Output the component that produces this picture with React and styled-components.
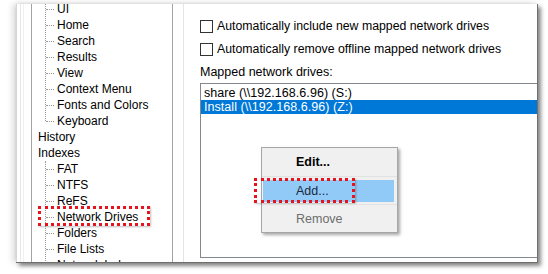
import styled, { createGlobalStyle } from 'styled-components';

const Global = createGlobalStyle`
html, body {
  margin: 0;
  padding: 0;
  background: #fff;
}
body {
  font-family: "Liberation Sans", Arial, sans-serif;
  font-size: 12px;
  color: #000;
}
`;

const Stage = styled.div`
width: 548px;
height: 274px;
padding: 4px 0 0 16px;
box-sizing: border-box;
overflow: hidden;
`;

const Window = styled.div`
display: flex;
width: 522px;
height: 259px;
box-sizing: border-box;
background: #fff;
border-right: 1px solid #6f6f6f;
border-bottom: 1px solid #6f6f6f;
box-shadow: 3px 3px 4px rgba(0, 0, 0, 0.45), -4px 0 6px rgba(0, 0, 0, 0.12), 0 -2px 4px rgba(0, 0, 0, 0.06);
overflow: hidden;
`;

const FrameEdge = styled.div`
width: 15px;
flex: none;
box-sizing: border-box;
border-left: 1px solid #d6d6d6;
background: linear-gradient(to right, #fff 0 3px, #e8e8e8 3px 4px, #fff 4px 6px, #efefef 6px 7px, #fff 7px);
`;

const TreePane = styled.div`
width: 142px;
flex: none;
box-sizing: border-box;
border-left: 1px solid #a3a3a3;
border-right: 1px solid #a3a3a3;
overflow: hidden;
`;

const TreeList = styled.div`
margin-top: -3px;
`;

const Group = styled.div`
position: relative;

&::before {
  content: "";
  position: absolute;
  left: 13px;
  top: 0;
  bottom: ${p => p.$open ? '-100px' : '8px'};
  border-left: 1px dotted #9a9a9a;
}
`;

const Node = styled.div`
position: relative;
height: 16px;
line-height: 16px;
padding-left: ${p => p.$child ? '25px' : '6px'};
white-space: nowrap;

${p => p.$child && `
&::before {
  content: "";
  position: absolute;
  left: 14px;
  top: 8px;
  width: 8px;
  border-top: 1px dotted #9a9a9a;
}
`}
`;

const Marker = styled.span`
position: absolute;
left: ${p => p.$left}px;
top: ${p => p.$top}px;
width: ${p => p.$w}px;
height: ${p => p.$h}px;
box-sizing: border-box;
border: 3px dotted #e8121c;
box-shadow: 1px 1px 2px rgba(0, 0, 0, 0.25);
pointer-events: none;
`;

const Splitter = styled.div`
width: 10px;
flex: none;
border-right: 1px solid #e4e4e4;
`;

const RightPane = styled.div`
flex: 1;
padding: 14px 0 0 16px;
display: flex;
flex-direction: column;
font-size: 12.3px;
`;

const CheckRow = styled.label`
display: flex;
align-items: center;
gap: 4px;
height: 16px;
margin-bottom: 7px;
white-space: nowrap;
`;

const Box = styled.span`
width: 13px;
height: 13px;
box-sizing: border-box;
border: 1px solid #333;
background: #fff;
flex: none;
`;

const Caption = styled.div`
height: 16px;
line-height: 16px;
margin-bottom: 3px;
font-size: 12.5px;
`;

const ListBox = styled.div`
position: relative;
width: 345px;
height: 175px;
box-sizing: border-box;
border: 1px solid #828790;
padding-top: 2px;
font-size: 12.5px;
`;

const ListItem = styled.div`
height: 14px;
line-height: 14px;
padding-left: 3px;
white-space: nowrap;
letter-spacing: 0.05px;
background: ${p => p.$selected ? '#0078d7' : 'transparent'};
color: ${p => p.$selected ? '#fff' : '#000'};
`;

const Menu = styled.div`
position: absolute;
left: 60px;
top: 63px;
width: 137px;
box-sizing: border-box;
border: 1px solid #a6a6a6;
background: #f0f0f0;
box-shadow: 2px 2px 3px rgba(0, 0, 0, 0.35);
font-size: 12.5px;
`;

const MenuItem = styled.div`
position: relative;
height: 28px;
box-sizing: border-box;
padding: 3px 3px 3px 1px;
border-top: ${p => p.$first ? 'none' : '1px solid #e2e2e2'};
`;

const ItemFace = styled.div`
height: 22px;
line-height: 22px;
padding-left: 33px;
background: ${p => p.$active ? '#91c9f7' : 'transparent'};
color: ${p => p.$disabled ? '#6d6d6d' : p.$active ? '#1b2a3a' : '#000'};
font-weight: ${p => p.$bold ? 'bold' : 'normal'};
`;

const groupA = ['UI', 'Home', 'Search', 'Results', 'View', 'Context Menu', 'Fonts and Colors', 'Keyboard'];
const groupB = ['FAT', 'NTFS', 'ReFS', 'Network Drives', 'Folders', 'File Lists', 'Network Index'];

const App = () => {
  return (
    <>
      <Global />
      <Stage>
        <Window>
          <FrameEdge />
          <TreePane>
            <TreeList>
              <Group>
                {groupA.map(n => <Node $child key={n}>{n}</Node>)}
              </Group>
              <Node>History</Node>
              <Node>Indexes</Node>
              <Group $open>
                {groupB.map(n => (
                  <Node $child key={n}>
                    {n}
                    {n === 'Network Drives' && <Marker $left={6} $top={-3} $w={112} $h={20} />}
                  </Node>
                ))}
              </Group>
            </TreeList>
          </TreePane>
          <Splitter />
          <RightPane>
            <CheckRow><Box />Automatically include new mapped network drives</CheckRow>
            <CheckRow><Box />Automatically remove offline mapped network drives</CheckRow>
            <Caption>Mapped network drives:</Caption>
            <ListBox>
              <ListItem>share (\\192.168.6.96) (S:)</ListItem>
              <ListItem $selected>Install (\\192.168.6.96) (Z:)</ListItem>
              <Menu>
                <MenuItem $first><ItemFace $bold>Edit...</ItemFace></MenuItem>
                <MenuItem>
                  <ItemFace $active>Add...</ItemFace>
                  <Marker $left={-8} $top={1} $w={101} $h={25} />
                </MenuItem>
                <MenuItem><ItemFace $disabled>Remove</ItemFace></MenuItem>
              </Menu>
            </ListBox>
          </RightPane>
        </Window>
      </Stage>
    </>
  );
};

export default App;
